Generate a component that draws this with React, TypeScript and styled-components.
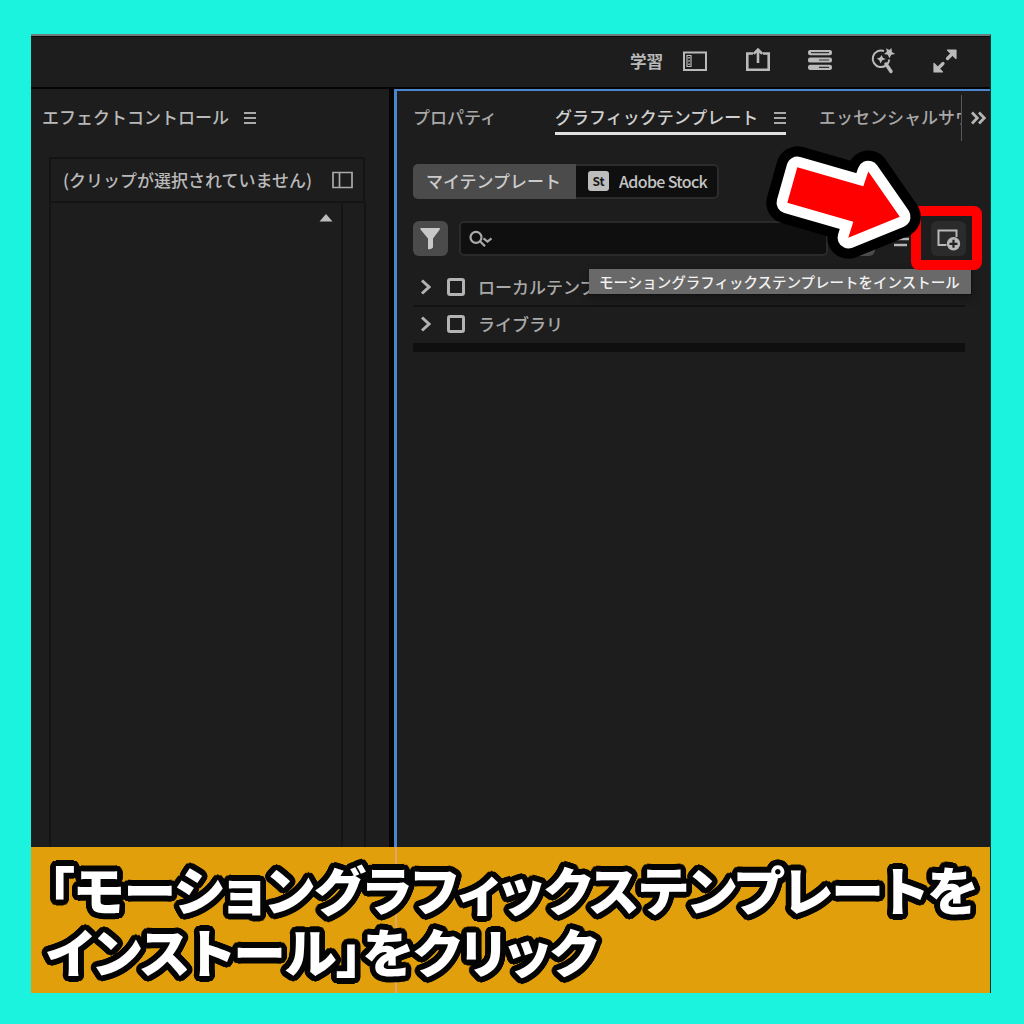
import React from "react";
import styled, { createGlobalStyle } from "styled-components";

const Global = createGlobalStyle`
  * { box-sizing: border-box; }
  body { margin: 0; background: #1cf3df; }
  svg { display: block; flex: none; }
`;

const Frame = styled.main`
  width: 1024px;
  height: 1024px;
  padding: 34px 33px 31px 31px;
  background: #1cf3df;
  overflow: hidden;
  font-family: "Noto Sans CJK JP", sans-serif;
`;

const AppWindow = styled.div`
  position: relative;
  height: 959px;
  display: flex;
  flex-direction: column;
  background: #1d1d1d;
  border-top: 2px solid #6f7d7c;
  border-right: 1px solid #0c3a36;
  color: #b9b9b9;
  font-size: 17px;
  line-height: 24px;
  font-weight: 500;
  white-space: nowrap;
`;

const TopBar = styled.header`
  height: 53px;
  flex: none;
  display: flex;
  align-items: center;
  padding: 0 32px 2px 599px;
  border-top: 1px solid #0a0a0a;
  border-bottom: 2px solid #050505;
`;

const Workspace = styled.span`
  width: 52px;
  font-weight: 700;
  font-size: 16.6px;
`;

const Tools = styled.div`
  display: flex;
  flex: 1;
  justify-content: space-between;
`;

const Panels = styled.div`
  flex: 1;
  display: flex;
  min-height: 0;
`;

const EffectPanel = styled.section`
  width: 358px;
  padding: 16px 0 0 11px;
`;

const Divider = styled.div`
  width: 5px;
  background: #050505;
`;

const TemplatePanel = styled.section`
  flex: 1;
  min-width: 0;
  border-left: 3px solid #4b84cf;
  border-top: 2px solid #4b84cf;
  padding-left: 16px;
`;

const PanelTitle = styled.div`
  display: flex;
  align-items: center;
  gap: 15px;
  height: 24px;
`;

const ClipBox = styled.div`
  width: 316px;
  height: 46px;
  margin: 28px 0 0 7px;
  padding: 0 10px 0 12px;
  border: 2px solid #141414;
  display: flex;
  align-items: center;
  justify-content: space-between;
  font-size: 17px;
`;

const ClipBody = styled.div`
  width: 317px;
  height: 700px;
  margin-left: 7px;
  display: flex;
  border: solid #141414;
  border-width: 0 2px;
`;

const ClipTrack = styled.div`
  width: 292px;
  padding: 10px 8px 0;
  border-right: 2px solid #141414;
  display: flex;
  justify-content: flex-end;
`;

const Tabs = styled.nav`
  display: flex;
  height: 50px;
  padding-top: 4px;
`;

const Tab = styled.div<{ $width: number; $active?: boolean }>`
  width: ${(p) => p.$width}px;
  height: 40px;
  padding-top: 10px;
  display: flex;
  justify-content: space-between;
  flex: none;
  overflow: hidden;
  color: ${(p) => (p.$active ? "#cfcfcf" : "#a8a8a8")};
  border-bottom: 3px solid ${(p) => (p.$active ? "#e0e0e0" : "transparent")};
`;

const TabGap = styled.div<{ $width: number }>`
  width: ${(p) => p.$width}px;
  flex: none;
`;

const More = styled.div`
  height: 46px;
  padding: 16px 0 0 8px;
  border-left: 1px solid #585858;
`;

const Sources = styled.div`
  display: flex;
  width: 306px;
  height: 35px;
  margin-top: 23px;
  border-radius: 5px;
  overflow: hidden;
`;

const MySource = styled.div`
  width: 163px;
  display: flex;
  align-items: center;
  justify-content: center;
  padding: 0 2px 1px 0;
  background: #4b4b4b;
  color: #cbcbcb;
`;

const StockSource = styled.div`
  flex: 1;
  display: flex;
  align-items: center;
  gap: 10px;
  padding: 0 0 1px 12px;
  background: #0f0f0f;
  border: 2px solid #2c2c2c;
  border-left: 0;
  border-radius: 0 5px 5px 0;
  color: #c4c4c4;
  font-size: 16px;
  letter-spacing: -0.65px;
`;

const StockBadge = styled.span`
  width: 21px;
  height: 20px;
  border-radius: 3px;
  background: #bdbdbd;
  color: #161616;
  font-size: 12px;
  font-weight: 700;
  line-height: 19px;
  letter-spacing: 0;
  text-align: center;
`;

const SearchRow = styled.div`
  height: 35px;
  margin-top: 22px;
  display: flex;
  align-items: center;
`;

const ToolButton = styled.div<{ $tone: string }>`
  width: 35px;
  height: 35px;
  border-radius: 6px;
  background: ${(p) => p.$tone};
  display: flex;
  align-items: center;
  justify-content: center;
`;

const SearchField = styled.div`
  width: 369px;
  height: 35px;
  margin: 0 12px 0 11px;
  padding-left: 8px;
  display: flex;
  align-items: center;
  background: #0f0f0f;
  border: 2px solid #2a2a2a;
  border-radius: 5px;
`;

const SortSlot = styled.div`
  width: 56px;
  padding-left: 18px;
  display: flex;
`;

const Folder = styled.div<{ $height: number; $line?: boolean }>`
  width: 552px;
  height: ${(p) => p.$height}px;
  display: flex;
  align-items: center;
  padding: 0 0 ${(p) => (p.$line ? 0 : 2)}px 7px;
  color: #a9a9a9;
  border-bottom: ${(p) => (p.$line ? "2px solid #131313" : "0")};
`;

const Folders = styled.div`
  padding-top: 13px;
`;

const Check = styled.span`
  width: 18px;
  height: 18px;
  margin: 0 13px 0 16px;
  border: 3px solid #b3b3b3;
  border-radius: 3px;
`;

const ListEnd = styled.div`
  width: 552px;
  height: 9px;
  background: #0f0f0f;
`;

const Highlight = styled.div`
  position: absolute;
  left: 880px;
  top: 170px;
  width: 71px;
  height: 64px;
  border-radius: 8px;
  border: 10px solid #fe0000;
`;

const Tooltip = styled.div`
  position: absolute;
  left: 558px;
  top: 233px;
  width: 383px;
  height: 26px;
  padding-left: 10px;
  background: #696969;
  border: solid #101010;
  border-width: 0 1px 1px 0;
  color: #f2f2f2;
  font-size: 14.5px;
  line-height: 25px;
  box-shadow: 0 3px 8px rgba(0, 0, 0, 0.3);
`;

const Arrow = styled.svg`
  position: absolute;
  left: 729px;
  top: 104px;
`;

const Caption = styled.footer`
  position: absolute;
  left: 0;
  right: 0;
  bottom: 0;
  height: 146px;
  padding: 10px 0 0 17px;
  background: linear-gradient(#dfa860, #dfa860) 364px 0 / 2px 100% no-repeat #e19f0b;
`;

const OUTLINE = Array.from({ length: 32 }, (_, i) => {
  const angle = (i * Math.PI) / 16;
  return `${(5.6 * Math.cos(angle)).toFixed(2)}px ${(5.6 * Math.sin(angle)).toFixed(2)}px 0 #050505`;
}).join(", ");

const CaptionLine = styled.div<{ $shift: number }>`
  height: 62px;
  margin-left: ${(p) => p.$shift}px;
  font-size: 52.7px;
  line-height: 62px;
  font-weight: 900;
  font-feature-settings: "palt";
  color: #fff;
  text-shadow: ${OUTLINE};
`;

const MenuIcon = ({ color = "#aaa" }: { color?: string }) => (
  <svg width="12" height="24" viewBox="0 0 12 24" stroke={color} strokeWidth="1.9">
    <path d="M0 8H12M0 13H12M0 18H12" />
  </svg>
);

const icon = { fill: "none", stroke: "#bababa", width: 26, height: 28, viewBox: "0 0 26 28" };

export default function App() {
  return (
    <Frame>
      <Global />
      <AppWindow>
        <TopBar>
          <Workspace>学習</Workspace>
          <Tools>
            <svg {...icon} strokeWidth="2">
              <path d="M2 5.5H24V23H2Z" />
              <path d="M5 8.5H9V19.5H5Z" strokeWidth="1.2" />
              <path d="M7 10v1.5M7 13.3v1.5M7 16.5v1.5" strokeWidth="1.6" />
            </svg>
            <svg {...icon} strokeWidth="2.6">
              <path d="M8 6.5H2.3V22.7H23.7V6.5H18M13 16V3M8.7 6.8L13 2.5L17.3 6.8" />
            </svg>
            <svg {...icon}>
              <g fill="#bababa" stroke="none">
                <rect x="1" y="3" width="24" height="5.2" rx="2.2" />
                <rect x="1" y="10.4" width="24" height="5.2" rx="2.2" />
                <rect x="1" y="17.8" width="24" height="5.2" rx="2.2" />
              </g>
              <path d="M4 5.6H22M12 13H22M12 20.4H22" stroke="#333" strokeWidth="1.2" />
            </svg>
            <svg {...icon}>
              <path d="M14 4A8.3 8.3 0 1 0 19.3 12.5" strokeWidth="2" />
              <path d="M16 17L21 24.5" strokeWidth="3.4" strokeLinecap="round" />
              <path
                d="M21.5 1L21.9 5L25.2 7L21.3 7.7L19.4 11.2L17.8 7.7L14 7L16.8 4.7L16.2 1.2L19.3 3.1Z M11.8 8L12.8 10.7L15.8 12L12.3 13.3L10.4 16.5L9.3 13.2L6.8 11.5L9.9 10.6Z"
                fill="#bababa"
                stroke="none"
              />
            </svg>
            <svg {...icon}>
              <path d="M15.5 11.5L20 7M11 16.5L6 21.5" strokeWidth="3.2" strokeLinecap="round" />
              <path
                d="M15.5 3H24V11.5Z M2 16.5V25H10.5Z"
                fill="#bababa"
                strokeWidth="1.2"
                strokeLinejoin="round"
              />
            </svg>
          </Tools>
        </TopBar>
        <Panels>
          <EffectPanel>
            <PanelTitle>
              エフェクトコントロール
              <MenuIcon />
            </PanelTitle>
            <ClipBox>
              (クリップが選択されていません)
              <svg width="21" height="18" viewBox="0 0 21 18" fill="none" stroke="#aaa" strokeWidth="1.7">
                <path d="M1 1.5H20V16.5H1ZM7.5 1.5V16.5" />
              </svg>
            </ClipBox>
            <ClipBody>
              <ClipTrack>
                <svg width="14" height="9" viewBox="0 0 14 9">
                  <path d="M0.5 8.5L7 1L13.5 8.5Z" fill="#bcbcbc" />
                </svg>
              </ClipTrack>
            </ClipBody>
          </EffectPanel>
          <Divider />
          <TemplatePanel>
            <Tabs>
              <Tab $width={85}>プロパティ</Tab>
              <TabGap $width={57} />
              <Tab $width={231} $active>
                グラフィックテンプレート
                <MenuIcon />
              </Tab>
              <TabGap $width={33} />
              <Tab $width={142}>エッセンシャルサウンド</Tab>
              <More>
                <svg width="17" height="14" viewBox="0 0 17 14" fill="none" stroke="#b5b5b5" strokeWidth="2.8">
                  <path d="M2 1.5L7.3 7L2 12.5M9 1.5L14.3 7L9 12.5" />
                </svg>
              </More>
            </Tabs>
            <Sources>
              <MySource>マイテンプレート</MySource>
              <StockSource>
                <StockBadge>St</StockBadge>Adobe Stock
              </StockSource>
            </Sources>
            <SearchRow>
              <ToolButton $tone="#4b4b4b">
                <svg width="22" height="22" viewBox="0 0 22 22">
                  <path d="M0.5 0H19.8V1.5L13 10.5V19.5Q11 22 8 21V10.5L0.5 1.5Z" fill="#c8c8c8" />
                </svg>
              </ToolButton>
              <SearchField>
                <svg width="24" height="18" viewBox="0 0 24 18" fill="none" stroke="#aaa" strokeWidth="2.2">
                  <circle cx="7" cy="7.3" r="5.5" />
                  <path d="M11 11.2L16 16.3M14.5 8.3L18.5 11.5L22.5 8.3" />
                </svg>
              </SearchField>
              <ToolButton $tone="#4b4b4b" />
              <SortSlot>
                <svg width="16" height="16" viewBox="0 0 16 16" stroke="#b5b5b5" strokeWidth="2.3">
                  <path d="M0 2H16M0 8H16M1 14H14" />
                </svg>
              </SortSlot>
              <ToolButton $tone="#2b2b2b">
                <svg width="26" height="24" viewBox="0 0 26 24" fill="none" stroke="#b8b8b8">
                  <path d="M10.5 18H2.5V3.5H20.5V10" strokeWidth="2" />
                  <circle cx="17.5" cy="16.8" r="6.7" fill="#b8b8b8" stroke="none" />
                  <path d="M17.5 12.8V20.8M13.5 16.8H21.5" stroke="#222" strokeWidth="2.2" />
                </svg>
              </ToolButton>
            </SearchRow>
            <Folders>
              {["ローカルテンプレート", "ライブラリ"].map((name, i) => (
                <Folder key={name} $height={i ? 36 : 38} $line={!i}>
                  <svg width="11" height="16" viewBox="0 0 11 16" fill="none" stroke="#b3b3b3" strokeWidth="3">
                    <path d="M2 1.5L9 8L2 14.5" />
                  </svg>
                  <Check />
                  {name}
                </Folder>
              ))}
              <ListEnd />
            </Folders>
          </TemplatePanel>
        </Panels>
        <Tooltip>モーショングラフィックステンプレートをインストール</Tooltip>
        <Highlight />
        <Arrow width="200" height="130" viewBox="760 140 200 130" strokeLinejoin="round">
          {[
            ["#000", 42],
            ["#fff", 21.5],
            ["none", 0],
          ].map(([stroke, width]) => (
            <path
              key={width}
              d="M797.3 167.3L863.3 186.3L868.3 171.5L899.8 216.7L848.3 237.7L853.3 221.7L787.3 202.7Z"
              fill="#fe0000"
              stroke={stroke as string}
              strokeWidth={width}
            />
          ))}
        </Arrow>
        <Caption>
          <CaptionLine $shift={0}>「モーショングラフィックステンプレートを</CaptionLine>
          <CaptionLine $shift={-2}>インストール」をクリック</CaptionLine>
        </Caption>
      </AppWindow>
    </Frame>
  );
}
